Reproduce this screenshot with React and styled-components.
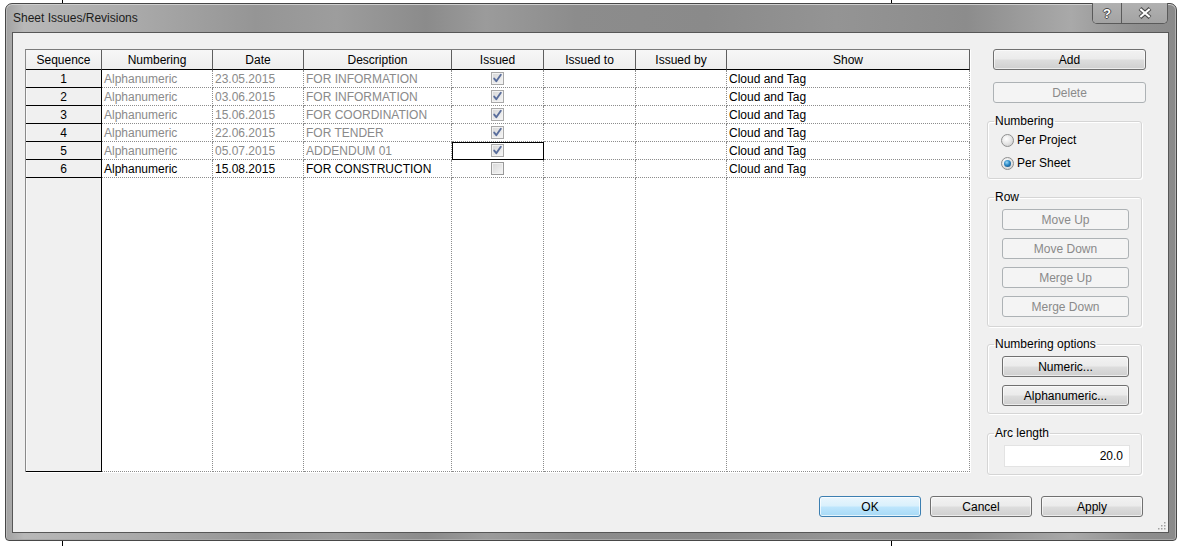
import React from 'react';
import styled, { createGlobalStyle, css } from 'styled-components';

const FONT = "'Liberation Sans', Arial, sans-serif";

const GlobalStyle = createGlobalStyle`
	html, body {
		margin: 0;
		padding: 0;
	}
	body {
		width: 1182px;
		height: 546px;
		overflow: hidden;
		background:
			linear-gradient(#000, #000) 62px 0 / 1px 100% no-repeat,
			linear-gradient(#000, #000) 891px 0 / 1px 100% no-repeat,
			#fff;
		font-family: ${FONT};
		font-size: 12px;
		color: #000;
	}
`;

const Window = styled.div`
	position: relative;
	margin: 3px 0 0 5px;
	width: 1172px;
	height: 538px;
	box-sizing: border-box;
	border: 1px solid #474747;
	border-radius: 7px 7px 4px 4px;
	padding: 0 7px 7px 6px;
	display: flex;
	flex-direction: column;
	background: linear-gradient(
		90deg,
		#a2a2a2 0px,
		#b8b8b8 18px,
		#ababab 120px,
		#959595 250px,
		#9d9d9d 330px,
		#8b8b8b 420px,
		#9b9b9b 480px,
		#8c8c8c 570px,
		#8a8a8a 700px,
		#949494 830px,
		#8c8c8c 960px,
		#a9a9a9 1065px,
		#8f8f8f 1130px,
		#8a8a8a 100%
	);
	box-shadow: inset 0 1px 0 #cfcfcf, inset 1px 0 0 #b9b9b9, inset -1px 0 0 #b0b0b0,
		inset 0 -1px 0 #a8a8a8;
`;

const TitleBar = styled.div`
	height: 28px;
	display: flex;
	align-items: flex-start;
`;

const Title = styled.div`
	padding: 7px 0 0 1px;
	line-height: 14px;
	font-size: 12px;
	color: #1c1c1c;
`;

const CaptionGroup = styled.div`
	margin: -1px 1px 0 auto;
	display: flex;
	height: 20px;
	border: 1px solid #5a5a5a;
	border-top: none;
	border-radius: 0 0 5px 5px;
	overflow: hidden;
	box-shadow: inset 0 -1px 0 #c4c4c4, inset 1px 0 0 #c4c4c4;
`;

const CaptionButton = styled.div`
	width: ${(p) => p.$w}px;
	display: flex;
	align-items: center;
	justify-content: center;
	background: linear-gradient(#b1b1b1, #a3a3a3);
	& + & {
		border-left: 1px solid #5a5a5a;
	}
`;

const HelpGlyph = styled.span`
	font: bold 13px ${FONT};
	color: #fff;
	line-height: 13px;
	text-shadow: 1px 0 0 #4a4a4a, -1px 0 0 #4a4a4a, 0 1px 0 #4a4a4a, 0 -1px 0 #4a4a4a;
`;

const Client = styled.div`
	position: relative;
	flex: 1;
	box-sizing: border-box;
	background: #f0f0f0;
	border: 1px solid #575757;
	display: flex;
	flex-direction: column;
`;

const Main = styled.div`
	height: 439px;
	box-sizing: border-box;
	display: flex;
	align-items: flex-start;
	padding: 16px 0 0 12px;
`;

const Grid = styled.div`
	width: 945px;
	height: 423px;
	box-sizing: border-box;
	display: grid;
	grid-template-columns: 76px 111px 91px 148px 92px 92px 91px 243px;
	grid-template-rows: 20px repeat(6, 18px) 1fr;
	border-left: 1px solid #8a8a8a;
	border-top: 1px solid #7a7a7a;
	box-shadow: 1px 1px 0 #fff;
`;

const HeadCell = styled.div`
	box-sizing: border-box;
	border-right: 1px solid #5e5e5e;
	border-bottom: 1px solid #000;
	background: linear-gradient(#f7f7f7, #ededed);
	text-align: center;
	padding-top: 1px;
	line-height: 18px;
	white-space: nowrap;
`;

const RowHead = styled.div`
	box-sizing: border-box;
	background: #f0f0f0;
	border-right: 1px solid #000;
	border-bottom: 1px solid #000;
	box-shadow: inset 1px 0 0 #fafafa;
	text-align: center;
	padding-top: 1px;
	line-height: 16px;
`;

const Cell = styled.div`
	box-sizing: border-box;
	background: #fff;
	border-right: 1px dotted #8c8c8c;
	border-bottom: 1px dotted #8c8c8c;
	padding: ${(p) => (p.$center ? '0' : '1px 0 0 2px')};
	line-height: 16px;
	white-space: nowrap;
	overflow: hidden;
	color: ${(p) => (p.$muted ? '#8a8a8a' : '#000')};
	${(p) =>
		p.$center &&
		css`
			display: flex;
			align-items: center;
			justify-content: center;
		`}
	${(p) =>
		p.$focus &&
		css`
			outline: 1px solid #000;
			outline-offset: -1px;
		`}
`;

const CheckBox = styled.span`
	width: 13px;
	height: 13px;
	box-sizing: border-box;
	border: 1px solid ${(p) => (p.$muted ? '#a9a9a9' : '#9a9a9a')};
	background: linear-gradient(135deg, #d6d6d6, #f6f6f6);
	box-shadow: inset 0 0 0 1px #f2f2f2;
	display: flex;
	align-items: center;
	justify-content: center;
`;

const Side = styled.div`
	margin-left: 17px;
	width: 160px;
	display: flex;
	flex-direction: column;
	align-items: flex-start;
`;

const buttonFace = css`
	box-sizing: border-box;
	height: 21px;
	padding: 0;
	font: 12px ${FONT};
	border-radius: 3px;
	color: #000;
	border: 1px solid #707070;
	background: linear-gradient(#f2f2f2 0%, #ebebeb 48%, #dddddd 52%, #cfcfcf 100%);
	box-shadow: inset 0 0 0 1px rgba(255, 255, 255, 0.6);
`;

const Button = styled.button`
	${buttonFace};
	width: ${(p) => p.$w || 102}px;
	margin-left: ${(p) => p.$ml || 0}px;
	margin-top: ${(p) => p.$mt || 0}px;
	${(p) =>
		p.disabled &&
		css`
			color: #8a8a8a;
			border-color: #adb2b5;
			background: #f4f4f4;
			box-shadow: none;
		`}
	${(p) =>
		p.$default &&
		css`
			border-color: #3c7fb1;
			background: linear-gradient(#eaf6fd 0%, #d9f0fc 48%, #bee6fd 52%, #a7d9f5 100%);
			box-shadow: inset 0 0 0 1px rgba(255, 255, 255, 0.7);
		`}
`;

const Group = styled.fieldset`
	box-sizing: border-box;
	width: 155px;
	margin: ${(p) => p.$mt}px 0 0 0;
	padding: ${(p) => p.$pad};
	border: 1px solid #d5d5d5;
	border-radius: 3px;
	box-shadow: 1px 1px 0 #fff, inset 1px 1px 0 #fff;
	display: flex;
	flex-direction: column;
	align-items: flex-start;
	gap: ${(p) => p.$gap || 0}px;
	min-width: 0;
	& > :not(legend) {
		margin-left: ${(p) => p.$inset || 0}px;
	}
`;

const Legend = styled.legend`
	margin-left: 6px;
	padding: 0 1px;
	line-height: 14px;
	font-size: 12px;
	color: #000;
`;

const RadioRow = styled.div`
	display: flex;
	align-items: center;
	gap: 3px;
	height: 18px;
`;

const Radio = styled.span`
	width: 13px;
	height: 13px;
	box-sizing: border-box;
	border-radius: 50%;
	border: 1px solid #8e8f8f;
	background: radial-gradient(circle at 40% 35%, #ffffff 0, #e8e8e8 45%, #c6c6c6 100%);
	display: flex;
	align-items: center;
	justify-content: center;
	&::after {
		content: '';
		display: ${(p) => (p.$checked ? 'block' : 'none')};
		width: 7px;
		height: 7px;
		border-radius: 50%;
		background: radial-gradient(circle at 40% 35%, #9ad8f7 0, #2a88c6 45%, #0e3b66 100%);
	}
`;

const NumberInput = styled.div`
	box-sizing: border-box;
	width: 126px;
	height: 22px;
	padding-right: 6px;
	background: #fff;
	border: 1px solid #e3e3e3;
	text-align: right;
	line-height: 20px;
`;

const Footer = styled.div`
	display: flex;
	justify-content: flex-end;
	gap: 9px;
	padding: 24px 25px 0 0;
`;

const Grip = styled.svg`
	position: absolute;
	right: 2px;
	bottom: 2px;
`;

const COLUMNS = ['Sequence', 'Numbering', 'Date', 'Description', 'Issued', 'Issued to', 'Issued by', 'Show'];

const ROWS = [
	{ seq: 1, date: '23.05.2015', desc: 'FOR INFORMATION', issued: true },
	{ seq: 2, date: '03.06.2015', desc: 'FOR INFORMATION', issued: true },
	{ seq: 3, date: '15.06.2015', desc: 'FOR COORDINATION', issued: true },
	{ seq: 4, date: '22.06.2015', desc: 'FOR TENDER', issued: true },
	{ seq: 5, date: '05.07.2015', desc: 'ADDENDUM 01', issued: true, focus: true },
	{ seq: 6, date: '15.08.2015', desc: 'FOR CONSTRUCTION', issued: false },
];

const Check = ({ checked, muted }) => (
	<CheckBox $muted={muted}>
		{checked && (
			<svg width='11' height='11' viewBox='0 0 11 11'>
				<path
					d='M2.2 5.6 L4.3 8.2 L8.8 1.8'
					fill='none'
					stroke={muted ? '#5a6e9c' : '#3b5390'}
					strokeWidth='1.9'
					strokeLinecap='round'
					strokeLinejoin='round'
				/>
			</svg>
		)}
	</CheckBox>
);

const CloseGlyph = () => (
	<svg width='16' height='12' viewBox='0 0 16 12'>
		<path d='M3 1.5 L13 10.5 M13 1.5 L3 10.5' stroke='#4a4a4a' strokeWidth='4.2' />
		<path d='M3.3 2 L12.7 10 M12.7 2 L3.3 10' stroke='#fff' strokeWidth='2.2' />
	</svg>
);

const App = () => (
	<>
		<GlobalStyle />
		<Window>
			<TitleBar>
				<Title>Sheet Issues/Revisions</Title>
				<CaptionGroup>
					<CaptionButton $w={28}>
						<HelpGlyph>?</HelpGlyph>
					</CaptionButton>
					<CaptionButton $w={45}>
						<CloseGlyph />
					</CaptionButton>
				</CaptionGroup>
			</TitleBar>
			<Client>
				<Main>
					<Grid>
						{COLUMNS.map((c) => (
							<HeadCell key={c}>{c}</HeadCell>
						))}
						{ROWS.map((r) => {
							const muted = r.seq !== 6;
							return (
								<React.Fragment key={r.seq}>
									<RowHead>{r.seq}</RowHead>
									<Cell $muted={muted}>Alphanumeric</Cell>
									<Cell $muted={muted}>{r.date}</Cell>
									<Cell $muted={muted}>{r.desc}</Cell>
									<Cell $center $focus={r.focus}>
										<Check checked={r.issued} muted={muted} />
									</Cell>
									<Cell />
									<Cell />
									<Cell>Cloud and Tag</Cell>
								</React.Fragment>
							);
						})}
						<RowHead />
						{COLUMNS.slice(1).map((c) => (
							<Cell key={c} />
						))}
					</Grid>
					<Side>
						<Button $w={153} $ml={6}>
							Add
						</Button>
						<Button $w={153} $ml={6} $mt={12} disabled>
							Delete
						</Button>
						<Group $mt={11} $pad='3px 0 6px 0' $gap={5} $inset={13}>
							<Legend>Numbering</Legend>
							<RadioRow>
								<Radio />
								Per Project
							</RadioRow>
							<RadioRow>
								<Radio $checked />
								Per Sheet
							</RadioRow>
						</Group>
						<Group $mt={11} $pad='5px 0 9px 0' $gap={8} $inset={14}>
							<Legend>Row</Legend>
							<Button $w={127} disabled>
								Move Up
							</Button>
							<Button $w={127} disabled>
								Move Down
							</Button>
							<Button $w={127} disabled>
								Merge Up
							</Button>
							<Button $w={127} disabled>
								Merge Down
							</Button>
						</Group>
						<Group $mt={10} $pad='5px 0 7px 0' $gap={8} $inset={14}>
							<Legend>Numbering options</Legend>
							<Button $w={127}>Numeric...</Button>
							<Button $w={127}>Alphanumeric...</Button>
						</Group>
						<Group $mt={12} $pad='5px 0 7px 0' $inset={16}>
							<Legend>Arc length</Legend>
							<NumberInput>20.0</NumberInput>
						</Group>
					</Side>
				</Main>
				<Footer>
					<Button $default>OK</Button>
					<Button>Cancel</Button>
					<Button>Apply</Button>
				</Footer>
				<Grip width='9' height='9' viewBox='0 0 9 9'>
					{[
						[7, 1],
						[4, 4],
						[7, 4],
						[1, 7],
						[4, 7],
						[7, 7],
					].map(([x, y]) => (
						<rect key={`${x}-${y}`} x={x} y={y} width='1.5' height='1.5' fill='#a0a0a0' />
					))}
				</Grip>
			</Client>
		</Window>
	</>
);

export default App;
